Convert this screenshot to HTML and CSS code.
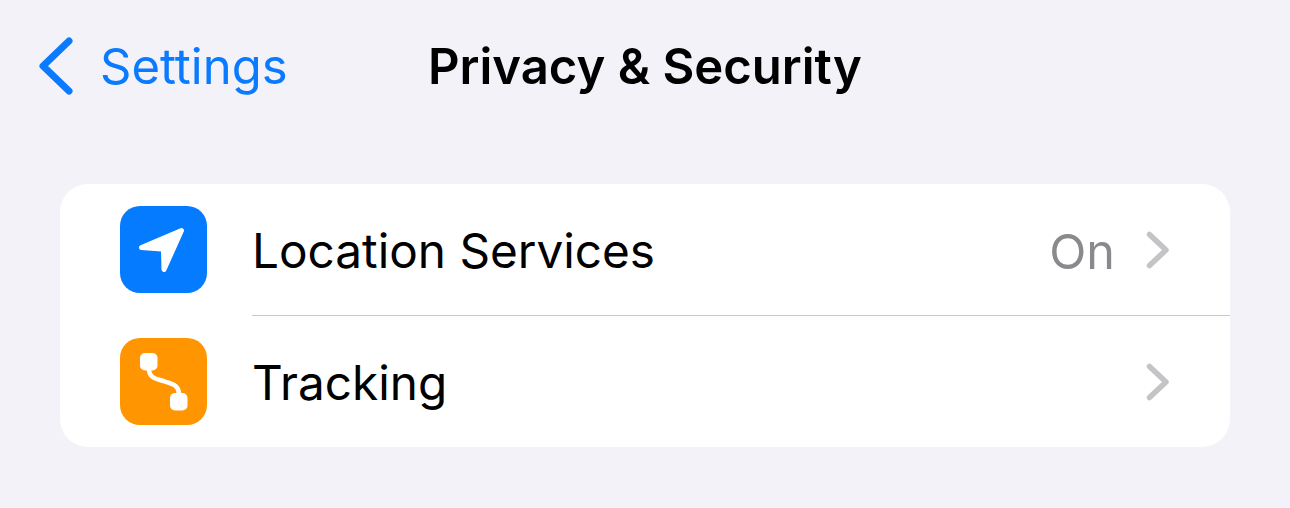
FILE: index.html
```html
<!DOCTYPE html>
<html lang="en">
<head>
    <meta charset="UTF-8">
    <title>Privacy &amp; Security</title>
    <link rel="stylesheet" href="styles.css">
</head>
<body>
    <div class="navbar">
        <div class="back">
            <svg class="back-icon" width="36" height="58" viewBox="0 0 36 58">
                <path d="M31 4 L5 29 L31 54" fill="none" stroke="#0a7aff" stroke-width="7" stroke-linecap="round" stroke-linejoin="round"/>
            </svg>
            <span class="back-label">Settings</span>
        </div>
        <div class="title">Privacy &amp; Security</div>
    </div>
    <div class="card">
        <div class="row">
            <div class="icon icon-blue">
                <svg width="87" height="87" viewBox="0 0 87 87">
                    <path d="M21.500 41.500 L61.500 24.500 L44 63.500 L43.500 45 Q43.500 43 41.500 43 Z" fill="#fff" stroke="#fff" stroke-width="5" stroke-linejoin="round"/>
                </svg>
            </div>
            <div class="row-body first">
                <span class="row-label">Location Services</span>
                <span class="row-value">On</span>
                <svg class="chevron" width="24" height="38" viewBox="0 0 24 38">
                    <path d="M3.500 3.500 L20 19 L3.500 34.500" fill="none" stroke="#c4c4c7" stroke-width="5.500" stroke-linecap="round" stroke-linejoin="round"/>
                </svg>
            </div>
        </div>
        <div class="row">
            <div class="icon icon-orange">
                <svg width="87" height="87" viewBox="0 0 87 87">
                    <rect x="20" y="15" width="17.500" height="17.500" rx="5" fill="#fff"/>
                    <rect x="50" y="55" width="17.500" height="17.500" rx="5" fill="#fff"/>
                    <path d="M29 31 C29 41 38 41 45 43.500 C52 46 59 47 59 56" fill="none" stroke="#fff" stroke-width="4.500"/>
                </svg>
            </div>
            <div class="row-body">
                <span class="row-label">Tracking</span>
                <svg class="chevron" width="24" height="38" viewBox="0 0 24 38">
                    <path d="M3.500 3.500 L20 19 L3.500 34.500" fill="none" stroke="#c4c4c7" stroke-width="5.500" stroke-linecap="round" stroke-linejoin="round"/>
                </svg>
            </div>
        </div>
    </div>
</body>
</html>
```
FILE: styles.css
```css
body {
    margin: 0;
    height: 508px;
    overflow: hidden;
    background-color: #f3f2f9;
    color: #000;
    font-family: Inter, "Liberation Sans", sans-serif;
}
.navbar {
    display: flex;
    align-items: center;
    height: 132px;
    padding-left: 38px;
}
.back {
    display: flex;
    align-items: center;
    gap: 26px;
    width: 390px;
}
.back-icon {
    flex: none;
}
.back-label {
    color: #0a7aff;
    font-size: 49px;
}
.title {
    font-size: 49px;
    font-weight: 600;
}
.card {
    margin: 52px 60px 0;
    background: #fff;
    border-radius: 28px;
    overflow: hidden;
}
.row {
    display: flex;
    align-items: center;
    height: 131.500px;
    padding-left: 60px;
}
.icon {
    flex: none;
    width: 87px;
    height: 87px;
    border-radius: 20px;
    margin-right: 45px;
}
.icon svg {
    display: block;
}
.icon-blue {
    background-color: #057bff;
}
.icon-orange {
    background-color: #ff9500;
}
.row-body {
    flex: 1;
    align-self: stretch;
    display: flex;
    align-items: center;
    padding-right: 60px;
}
.row-body.first {
    border-bottom: 1px solid #c8c8cb;
}
.row-label {
    flex: 1;
    padding-top: 4px;
    font-size: 47.700px;
}
.row-value {
    padding-top: 4px;
    color: #8a8a8e;
    font-size: 48.500px;
    margin-right: 31px;
}
.chevron {
    flex: none;
    margin-top: 2px;
}
```
